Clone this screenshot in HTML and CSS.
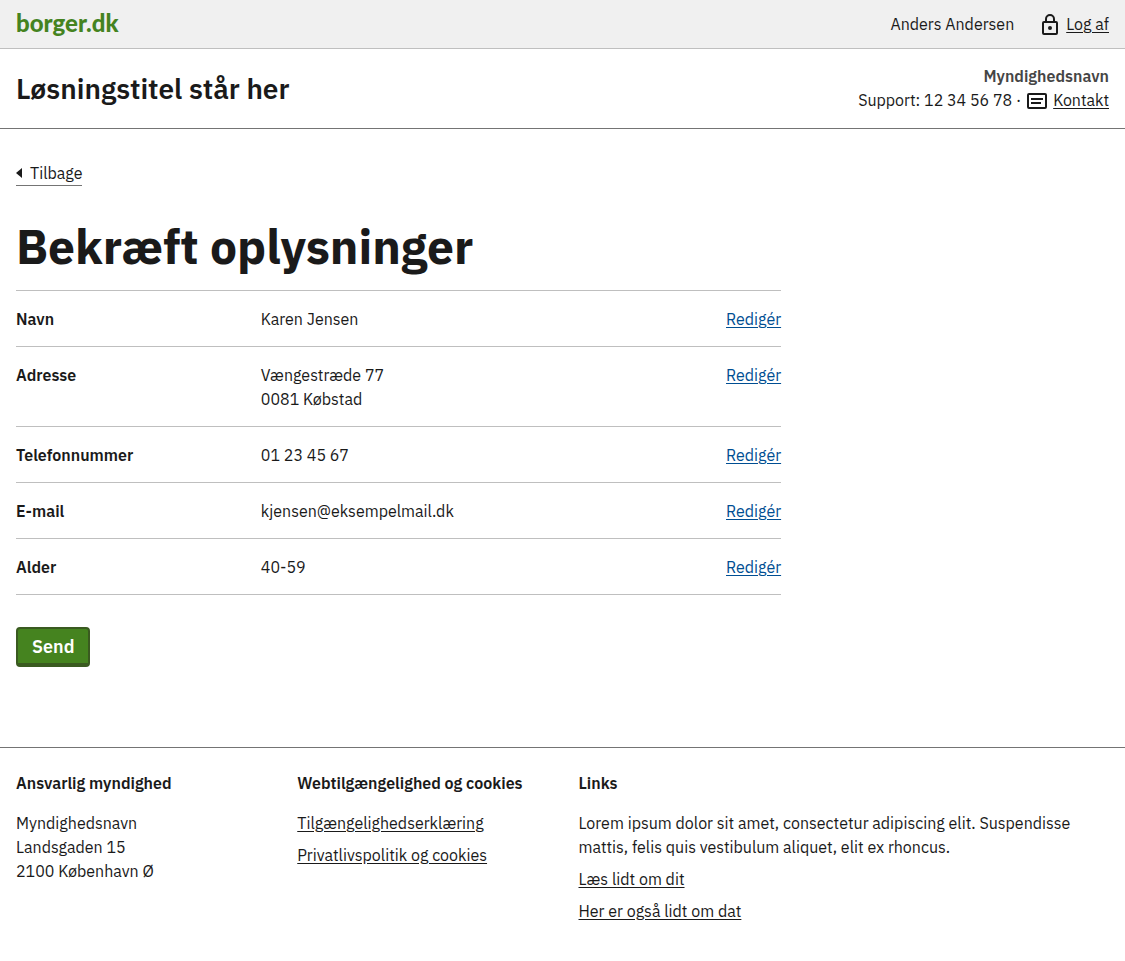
FILE: index.html
```html
<!DOCTYPE html>
<html lang="da">
<head>
<meta charset="utf-8">
<meta name="viewport" content="width=device-width, initial-scale=1">
<title>Bekræft oplysninger</title>
<link rel="stylesheet" href="styles.css">
</head>
<body>
<header>
  <div class="portal-bar">
    <a class="logo" href="#">borger.dk</a>
    <div class="user">
      <span>Anders Andersen</span>
      <a class="icon-link" href="#">
        <svg class="icon" viewBox="0 0 24 24" aria-hidden="true"><path d="M8 10V7a4 4 0 0 1 8 0v3" fill="none" stroke="currentColor" stroke-width="2"/><rect x="5" y="10" width="14" height="12" rx="1" fill="none" stroke="currentColor" stroke-width="2"/><circle cx="12" cy="16" r="2" fill="currentColor"/></svg>
        <span class="link-text">Log af</span>
      </a>
    </div>
  </div>
  <div class="solution-bar">
    <p class="solution-title">Løsningstitel står her</p>
    <div class="authority">
      <strong>Myndighedsnavn</strong>
      <div class="support">
        <span>Support: 12 34 56 78 ·</span>
        <a class="icon-link" href="#">
          <svg class="icon" viewBox="0 0 24 24" aria-hidden="true"><rect x="3" y="6" width="18" height="14" rx="1" fill="none" stroke="currentColor" stroke-width="2"/><path d="M6 11h12M6 15h10" stroke="currentColor" stroke-width="2"/></svg>
          <span class="link-text">Kontakt</span>
        </a>
      </div>
    </div>
  </div>
</header>
<main>
  <a class="back" href="#"><svg class="arrow" viewBox="0 0 6 10" aria-hidden="true"><path d="M6 0v10L0 5z" fill="currentColor"/></svg>Tilbage</a>
  <h1>Bekræft oplysninger</h1>
  <table class="summary">
    <tbody>
      <tr><th scope="row">Navn</th><td>Karen Jensen</td><td class="edit"><a href="#">Redigér</a></td></tr>
      <tr><th scope="row">Adresse</th><td>Vængestræde 77<br>0081 Købstad</td><td class="edit"><a href="#">Redigér</a></td></tr>
      <tr><th scope="row">Telefonnummer</th><td>01 23 45 67</td><td class="edit"><a href="#">Redigér</a></td></tr>
      <tr><th scope="row">E-mail</th><td>kjensen@eksempelmail.dk</td><td class="edit"><a href="#">Redigér</a></td></tr>
      <tr><th scope="row">Alder</th><td>40-59</td><td class="edit"><a href="#">Redigér</a></td></tr>
    </tbody>
  </table>
  <button class="send" type="button">Send</button>
</main>
<footer>
  <section>
    <h2>Ansvarlig myndighed</h2>
    <p>Myndighedsnavn<br>Landsgaden 15<br>2100 København Ø</p>
  </section>
  <section>
    <h2>Webtilgængelighed og cookies</h2>
    <ul>
      <li><a href="#">Tilgængelighedserklæring</a></li>
      <li><a href="#">Privatlivspolitik og cookies</a></li>
    </ul>
  </section>
  <section>
    <h2>Links</h2>
    <p>Lorem ipsum dolor sit amet, consectetur adipiscing elit. Suspendisse mattis, felis quis vestibulum aliquet, elit ex rhoncus.</p>
    <ul>
      <li><a href="#">Læs lidt om dit</a></li>
      <li><a href="#">Her er også lidt om dat</a></li>
    </ul>
  </section>
</footer>
</body>
</html>
```
FILE: styles.css
```css
* { box-sizing: border-box; }
body {
  margin: 0;
  color: #1a1a1a;
  background: #fff;
  font: 400 16px/24px "IBM Plex Sans Light", "IBM Plex Sans", "Noto Sans", sans-serif;
}
a { color: inherit; text-underline-offset: 2px; }
p, ul, h1, h2 { margin: 0; }
.portal-bar, .solution-bar {
  display: flex;
  justify-content: space-between;
  padding: 0 16px;
}
.portal-bar {
  align-items: center;
  min-height: 49px;
  background: #f0f0f0;
  border-bottom: 1px solid #bfbfbf;
}
.logo {
  color: #45831f;
  font: 900 24px/46px Lato, sans-serif;
  text-decoration: none;
  align-self: flex-start;
}
.user { display: flex; gap: 24px; }
.icon { width: 24px; height: 24px; flex: none; }
.icon-link { display: flex; gap: 4px; text-decoration: none; }
.link-text { text-decoration: underline; text-underline-offset: 2px; }
.solution-bar {
  align-items: flex-start;
  padding-top: 15px;
  padding-bottom: 14px;
  border-bottom: 1px solid #747474;
}
.solution-title { font-size: 28px; line-height: 50px; font-weight: 600; }
.authority { text-align: right; }
.authority strong { color: #454545; font-weight: 600; }
.support { display: flex; gap: 4px; }
main { padding: 31px 16px 80px; }
.back {
  display: inline-flex;
  align-items: center;
  gap: 8px;
  border-bottom: 1px solid #747474;
  text-decoration: none;
}
.arrow { width: 6px; height: 10px; }
h1 {
  margin: 28px 0 12px;
  font-size: 48px;
  line-height: 64px;
  font-weight: 700;
}
.summary {
  width: 70%;
  border-collapse: separate;
  border-spacing: 0;
  border-top: 1px solid #bfbfbf;
}
.summary th, .summary td {
  padding: 16px 0 15px;
  border-bottom: 1px solid #bfbfbf;
  text-align: left;
  vertical-align: top;
}
.summary th { width: 32%; font-weight: 600; }
.summary .edit { text-align: right; color: #004e92; }
.send {
  display: block;
  margin-top: 32px;
  padding: 5px 14px 3px;
  border: 2px solid #3a5a20;
  border-bottom-width: 4px;
  border-radius: 4px;
  background: #45831f;
  color: #fff;
  font: 600 18px/26px "IBM Plex Sans", "Noto Sans", sans-serif;
}
footer {
  display: grid;
  grid-template-columns: 1fr 1fr 2fr;
  padding: 23px 0 36px;
  border-top: 1px solid #747474;
}
footer section { padding: 0 16px; min-width: 0; }
footer h2 {
  margin-bottom: 16px;
  font-size: 16px;
  line-height: 24px;
  font-weight: 600;
}
footer ul { display: grid; gap: 8px; padding: 0; list-style: none; }
footer p + ul { margin-top: 8px; }
```
